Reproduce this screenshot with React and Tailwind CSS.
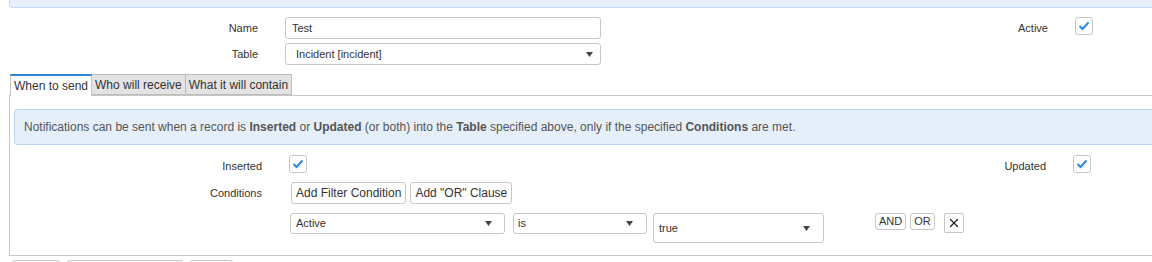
import { X } from 'lucide-react'

function Check() {
  return (
    <span className="flex h-[18px] w-[18px] shrink-0 items-center justify-center rounded-[3px] border border-[#c6c6c6] bg-white">
      <svg width="12" height="10" viewBox="0 0 12 10">
        <path d="M1.5 5 L4.5 8 L10.5 1.5" fill="none" stroke="#2b87e3" strokeWidth="2" />
      </svg>
    </span>
  )
}

function Caret() {
  return (
    <svg width="7" height="5" viewBox="0 0 7 5" className="shrink-0">
      <path d="M0 0 H7 L3.5 5 Z" fill="#444" />
    </svg>
  )
}

function Btn({ children, className = '' }) {
  return (
    <button className={`flex items-center rounded-[3px] border border-[#c6c6c6] bg-white text-[#333] ${className}`}>
      {children}
    </button>
  )
}

function App() {
  return (
    <div className="h-[262px] w-[1152px] overflow-hidden bg-white font-['Liberation_Sans',Arial,sans-serif] text-[11px] text-[#333]">
      <div className="ml-[9px] h-[8px] w-[1160px] rounded-bl-[4px] border-b border-l border-[#c3d9f2] bg-[#e6f0fb]" />

      {/* header form */}
      <div className="mt-[9px] flex flex-col gap-[4px]">
        <div className="flex items-start">
          <div className="flex w-[1000px] items-center">
            <span className="w-[258px] text-right">Name</span>
            <div className="ml-[27px] flex h-[22px] w-[316px] items-center rounded-[3px] border border-[#c6c6c6] px-[6px]">Test</div>
          </div>
          <div className="flex h-[18px] items-start">
            <span className="mt-[5px] w-[48px] text-right leading-[13px]">Active</span>
            <div className="ml-[27px]"><Check /></div>
          </div>
        </div>
        <div className="flex items-center">
          <span className="w-[258px] text-right">Table</span>
          <div className="ml-[27px] flex h-[22px] w-[316px] items-center justify-between rounded-[3px] border border-[#c6c6c6] pl-[10px] pr-[7px]">
            <span>Incident [incident]</span>
            <Caret />
          </div>
        </div>
      </div>

      {/* tabs */}
      <div className="relative z-10 ml-[10px] mt-[9px] flex h-[21px] text-[12px]">
        <div className="flex h-[22px] items-center border-x border-t-2 border-[#c6c6c6] border-t-[#2b84d6] bg-white px-[3px]">When to send</div>
        <div className="flex h-[21px] items-center border border-l-0 border-[#bdbdbd] bg-[#e3e3e3] px-[3px]">Who will receive</div>
        <div className="flex h-[21px] items-center border border-l-0 border-[#bdbdbd] bg-[#e3e3e3] px-[3px]">What it will contain</div>
      </div>

      {/* panel */}
      <div className="ml-[9px] w-[1160px] border border-[#c6c6c6] pb-[12px] pl-[4px] pt-[13px]">
        <div className="flex h-[36px] items-center rounded-[3px] border border-[#bcd7f3] bg-[#e5effa] pl-[9px] text-[12px] text-[#555]">
          <span>
            Notifications can be sent when a record is <b>Inserted</b> or <b>Updated</b> (or both) into the <b>Table</b> specified above, only if the specified <b>Conditions</b> are met.
          </span>
        </div>

        <div className="mt-[10px] flex h-[18px] items-start">
          <div className="flex w-[986px] items-start">
            <span className="mt-[5px] w-[248px] text-right leading-[13px]">Inserted</span>
            <div className="ml-[27px]"><Check /></div>
          </div>
          <span className="mt-[5px] w-[46px] text-right leading-[13px]">Updated</span>
          <div className="ml-[27px]"><Check /></div>
        </div>

        <div className="mt-[9px] flex items-center">
          <span className="w-[248px] text-right">Conditions</span>
          <div className="ml-[29px] flex gap-[4px]">
            <Btn className="h-[22px] px-[4px] text-[12px]">Add Filter Condition</Btn>
            <Btn className="h-[22px] px-[4px] text-[12px]">Add "OR" Clause</Btn>
          </div>
        </div>

        <div className="mt-[9px] flex items-start pl-[276px]">
          <div className="flex h-[21px] w-[215px] items-center justify-between rounded-[3px] border border-[#c6c6c6] pl-[5px] pr-[12px]">
            <span>Active</span>
            <Caret />
          </div>
          <div className="ml-[8px] flex h-[21px] w-[134px] items-center justify-between rounded-[3px] border border-[#c6c6c6] pl-[4px] pr-[13px]">
            <span>is</span>
            <Caret />
          </div>
          <div className="ml-[6px] flex h-[30px] w-[171px] items-center justify-between rounded-[3px] border border-[#c6c6c6] pl-[5px] pr-[13px] pt-[1px]">
            <span>true</span>
            <Caret />
          </div>
          <div className="ml-[51px] flex gap-[4px]">
            <Btn className="h-[17px] px-[3px] text-[11px]">AND</Btn>
            <Btn className="h-[17px] px-[3px] text-[11px]">OR</Btn>
            <button className="ml-[5px] flex h-[20px] w-[20px] items-center justify-center rounded-[2px] border border-[#c6c6c6] bg-white">
              <X size={14} strokeWidth={2.25} color="#222" />
            </button>
          </div>
        </div>
      </div>

      {/* bottom buttons */}
      <div className="ml-[12px] mt-[4px] flex gap-[7px]">
        <Btn className="h-[24px] w-[48px]" />
        <Btn className="h-[24px] w-[116px]" />
        <Btn className="h-[24px] w-[43px]" />
      </div>
    </div>
  )
}

export default App
